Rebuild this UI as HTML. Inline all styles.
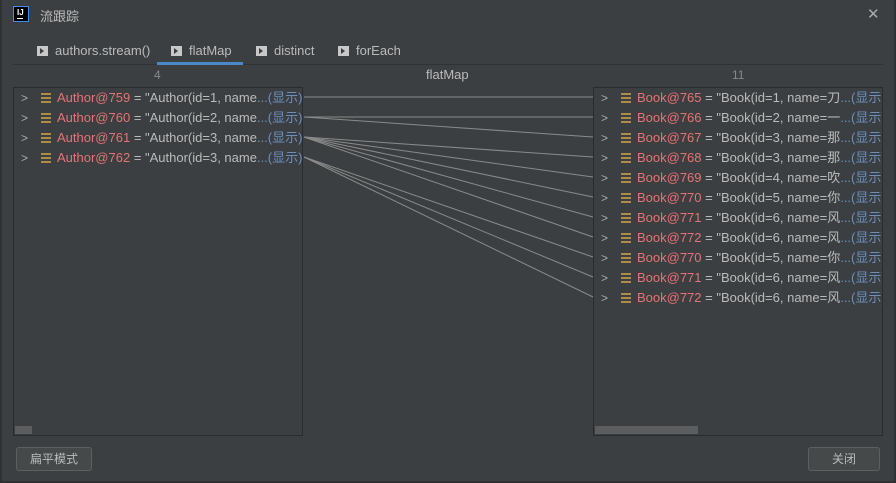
<!DOCTYPE html>
<html><head><meta charset="utf-8"><style>
*{margin:0;padding:0;box-sizing:border-box}
body{width:896px;height:483px;background:#3c3f41;font-family:"Liberation Sans","Noto Sans CJK SC",sans-serif;color:#bbbbbb;position:relative;overflow:hidden;font-size:13px}
.abs{position:absolute}
.win{left:0;top:0;width:896px;height:483px;border-left:2px solid #2f3133;border-right:2px solid #2f3133;border-bottom:2px solid #2f3133}
.tab{top:42px;height:18px;line-height:18px;font-size:13px;color:#bbbbbb;white-space:nowrap}
.ti{display:inline-block;width:11px;height:10px;background:#c8c8c8;vertical-align:-1px;margin-right:7px;position:relative}
.ti:after{content:"";position:absolute;left:3px;top:2px;border-left:4px solid #3c3f41;border-top:3px solid transparent;border-bottom:3px solid transparent}
.panel{top:87px;height:349px;width:290px;border:1px solid #2b2b2b;background:#3c3f41}
.row{position:absolute;left:0;height:20px;line-height:20px;white-space:nowrap;font-size:13px;width:100%;overflow:hidden}
.chev{position:absolute;left:7px;top:0;color:#aaa;font-size:12px}
.ic{position:absolute;left:27px;top:5px;width:10px;height:10px;background:linear-gradient(#b08b45 0 2px,transparent 2px 4px,#b08b45 4px 6px,transparent 6px 8px,#b08b45 8px 10px)}
.tx{position:absolute;left:43px;top:0}
.r{color:#e57373}.s{color:#6a8fbf}
.btn{top:447px;height:24px;border:1px solid #5e6060;border-radius:3px;background:#45494a;color:#bbb;text-align:center;line-height:22px;font-size:12px}
</style></head><body>
<div class="abs win"></div>
<div class="abs" style="left:13px;top:6px;width:16px;height:16px;border:1px solid #3d8fe8;background:#000"><div style="position:absolute;left:3px;top:1px;color:#fff;font-size:8px;font-weight:bold;line-height:9px">IJ</div><div style="position:absolute;left:3px;top:11px;width:6px;height:1px;background:#fff"></div></div>
<div class="abs" style="left:40px;top:6px;font-size:13px;color:#bbb">流跟踪</div>
<div class="abs" style="left:867px;top:5px;font-size:15px;color:#aaa">✕</div>
<div class="abs tab" style="left:37px"><span class="ti"></span>authors.stream()</div>
<div class="abs tab" style="left:171px"><span class="ti"></span>flatMap</div>
<div class="abs tab" style="left:256px"><span class="ti"></span>distinct</div>
<div class="abs tab" style="left:338px"><span class="ti"></span>forEach</div>
<div class="abs" style="left:13px;top:64px;width:870px;height:1px;background:#323232"></div>
<div class="abs" style="left:157px;top:62px;width:86px;height:3px;background:#4a88c7"></div>
<div class="abs" style="left:154px;top:68px;font-size:12px;color:#888">4</div>
<div class="abs" style="left:426px;top:67px;font-size:13px;color:#bbb">flatMap</div>
<div class="abs" style="left:732px;top:68px;font-size:12px;color:#888">11</div>
<div class="abs panel" style="left:13px">
<div class="row" style="top:0"><span class="chev">&gt;</span><span class="ic"></span><span class="tx"><span class="r">Author@759</span> = "Author(id=1, name<span class="s">...(显示)</span></span></div>
<div class="row" style="top:20px"><span class="chev">&gt;</span><span class="ic"></span><span class="tx"><span class="r">Author@760</span> = "Author(id=2, name<span class="s">...(显示)</span></span></div>
<div class="row" style="top:40px"><span class="chev">&gt;</span><span class="ic"></span><span class="tx"><span class="r">Author@761</span> = "Author(id=3, name<span class="s">...(显示)</span></span></div>
<div class="row" style="top:60px"><span class="chev">&gt;</span><span class="ic"></span><span class="tx"><span class="r">Author@762</span> = "Author(id=3, name<span class="s">...(显示)</span></span></div>
<div style="position:absolute;left:1px;top:338px;width:17px;height:8px;background:#5b5d5f"></div>
</div>
<div class="abs panel" style="left:593px">
<div class="row" style="top:0"><span class="chev">&gt;</span><span class="ic"></span><span class="tx"><span class="r">Book@765</span> = "Book(id=1, name=刀<span class="s">...(显示)</span></span></div>
<div class="row" style="top:20px"><span class="chev">&gt;</span><span class="ic"></span><span class="tx"><span class="r">Book@766</span> = "Book(id=2, name=一<span class="s">...(显示)</span></span></div>
<div class="row" style="top:40px"><span class="chev">&gt;</span><span class="ic"></span><span class="tx"><span class="r">Book@767</span> = "Book(id=3, name=那<span class="s">...(显示)</span></span></div>
<div class="row" style="top:60px"><span class="chev">&gt;</span><span class="ic"></span><span class="tx"><span class="r">Book@768</span> = "Book(id=3, name=那<span class="s">...(显示)</span></span></div>
<div class="row" style="top:80px"><span class="chev">&gt;</span><span class="ic"></span><span class="tx"><span class="r">Book@769</span> = "Book(id=4, name=吹<span class="s">...(显示)</span></span></div>
<div class="row" style="top:100px"><span class="chev">&gt;</span><span class="ic"></span><span class="tx"><span class="r">Book@770</span> = "Book(id=5, name=你<span class="s">...(显示)</span></span></div>
<div class="row" style="top:120px"><span class="chev">&gt;</span><span class="ic"></span><span class="tx"><span class="r">Book@771</span> = "Book(id=6, name=风<span class="s">...(显示)</span></span></div>
<div class="row" style="top:140px"><span class="chev">&gt;</span><span class="ic"></span><span class="tx"><span class="r">Book@772</span> = "Book(id=6, name=风<span class="s">...(显示)</span></span></div>
<div class="row" style="top:160px"><span class="chev">&gt;</span><span class="ic"></span><span class="tx"><span class="r">Book@770</span> = "Book(id=5, name=你<span class="s">...(显示)</span></span></div>
<div class="row" style="top:180px"><span class="chev">&gt;</span><span class="ic"></span><span class="tx"><span class="r">Book@771</span> = "Book(id=6, name=风<span class="s">...(显示)</span></span></div>
<div class="row" style="top:200px"><span class="chev">&gt;</span><span class="ic"></span><span class="tx"><span class="r">Book@772</span> = "Book(id=6, name=风<span class="s">...(显示)</span></span></div>
<div style="position:absolute;left:1px;top:338px;width:103px;height:8px;background:#5b5d5f"></div>
</div>
<svg class="abs" style="left:0;top:0" width="896" height="483"><g stroke="#8a8a8a" stroke-width="1" fill="none">
<line x1="304" y1="97" x2="593" y2="97"/>
<line x1="304" y1="117" x2="593" y2="117"/>
<line x1="304" y1="117" x2="593" y2="137"/>
<line x1="304" y1="137" x2="593" y2="157"/>
<line x1="304" y1="137" x2="593" y2="177"/>
<line x1="304" y1="137" x2="593" y2="197"/>
<line x1="304" y1="137" x2="593" y2="217"/>
<line x1="304" y1="137" x2="593" y2="237"/>
<line x1="304" y1="157" x2="593" y2="257"/>
<line x1="304" y1="157" x2="593" y2="277"/>
<line x1="304" y1="157" x2="593" y2="297"/>
</g></svg>
<div class="abs btn" style="left:16px;width:76px">扁平模式</div>
<div class="abs btn" style="left:808px;width:72px">关闭</div>
</body></html>
